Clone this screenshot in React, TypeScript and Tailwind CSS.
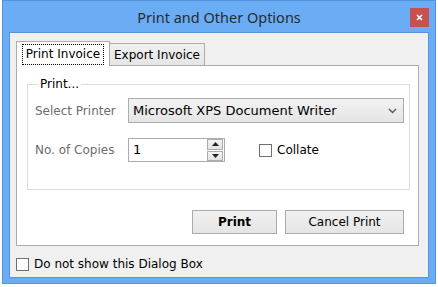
import React from "react";

const ui = { fontFamily: '"DejaVu Sans", Verdana, sans-serif' };

const Checkbox: React.FC = () => (
  <span className="inline-block w-[13px] h-[13px] border border-[#707070] bg-white" />
);

const App: React.FC = () => {
  return (
    <div className="w-[438px] h-[287px] bg-white">
      <div className="ml-[2px] w-[434px] h-[284px] bg-[#6aadf5] border border-[#5492da] flex flex-col px-[6px] pb-[5px]">
        {/* title bar */}
        <div className="relative h-[31px] flex items-center justify-center pt-[2px]">
          <span
            className="text-[14.5px] text-[#2b2b2b]"
            style={{ fontFamily: '"Noto Sans", "Open Sans", sans-serif' }}
          >
            Print and Other Options
          </span>
          <button className="absolute right-[0px] top-[7px] w-[19px] h-[19px] bg-[#c75050] flex items-center justify-center">
            <svg width="7" height="7" viewBox="0 0 7 7">
              <path d="M1 1l5 5M6 1l-5 5" stroke="#fff" strokeWidth="1.6" />
            </svg>
          </button>
        </div>

        {/* body */}
        <div
          className="flex-1 bg-[#f0f0f0] border border-[#5a94d6] flex flex-col pt-[7px] pl-[6px] pr-[9px]"
          style={ui}
        >
          {/* tabs */}
          <div className="flex items-end h-[25px] text-[12px] text-black">
            <div className="relative z-10 h-[25px] w-[94px] bg-white border border-b-0 border-[#acacac] flex items-center justify-center -mb-px">
              <span className="border border-dotted border-black px-[3px] h-[21px] flex items-center">
                Print Invoice
              </span>
            </div>
            <div className="h-[22px] w-[95px] border border-l-0 border-b-0 border-[#acacac] flex items-center justify-center bg-gradient-to-b from-[#f0f0f0] to-[#e5e5e5]">
              Export Invoice
            </div>
          </div>

          {/* panel */}
          <div className="h-[181px] bg-white border border-[#acacac] flex flex-col pl-[10px] pr-[8px]">
            <fieldset className="mt-[10px] h-[114px] border border-[#dcdcdc] pl-[7px] pr-[5px]">
              <legend className="ml-[3px] px-[2px] text-[12px] text-black leading-[16px]">
                Print...
              </legend>
              <div className="flex items-center mt-[6px] h-[25px]">
                <span className="w-[93px] text-[12px] text-[#6d6d6d]">
                  Select Printer
                </span>
                <div className="flex-1 h-[25px] border border-[#acacac] bg-gradient-to-b from-[#f2f2f2] to-[#e5e5e5] flex items-center pl-[4px] pr-[6px] text-[13px] text-black">
                  <span className="flex-1">Microsoft XPS Document Writer</span>
                  <svg width="9" height="6" viewBox="0 0 9 6">
                    <path d="M1 1l3.5 3.5L8 1" stroke="#555" strokeWidth="1.4" fill="none" />
                  </svg>
                </div>
              </div>
              <div className="flex items-center mt-[15px] h-[24px]">
                <span className="w-[93px] text-[12px] text-[#6d6d6d]">
                  No. of Copies
                </span>
                <div className="w-[97px] h-[24px] border border-[#acacac] bg-white flex items-center">
                  <span className="flex-1 pl-[4px] text-[13px] text-black">1</span>
                  <div className="w-[16px] h-[22px] flex flex-col gap-px mr-px">
                    <div className="flex-1 bg-gradient-to-b from-[#f4f4f4] to-[#e2e2e2] border border-[#acacac] flex items-center justify-center">
                      <svg width="7" height="4" viewBox="0 0 7 4">
                        <path d="M0 4L3.5 0L7 4Z" fill="#222" />
                      </svg>
                    </div>
                    <div className="flex-1 bg-gradient-to-b from-[#f4f4f4] to-[#e2e2e2] border border-[#acacac] flex items-center justify-center">
                      <svg width="7" height="4" viewBox="0 0 7 4">
                        <path d="M0 0L3.5 4L7 0Z" fill="#222" />
                      </svg>
                    </div>
                  </div>
                </div>
                <div className="ml-[34px] flex items-center gap-[5px] text-[12px] text-black">
                  <Checkbox />
                  <span>Collate</span>
                </div>
              </div>
            </fieldset>

            <div className="flex justify-end gap-[8px] mt-[20px] pr-[6px]">
              <button className="w-[85px] h-[24px] border border-[#acacac] bg-gradient-to-b from-[#f0f0f0] to-[#e5e5e5] text-[12px] font-bold text-black">
                Print
              </button>
              <button className="w-[119px] h-[24px] border border-[#acacac] bg-gradient-to-b from-[#f0f0f0] to-[#e5e5e5] text-[12px] text-black">
                Cancel Print
              </button>
            </div>
          </div>

          {/* footer */}
          <div className="flex items-center gap-[5px] mt-[9px] text-[12px] text-black">
            <Checkbox />
            <span>Do not show this Dialog Box</span>
          </div>
        </div>
      </div>
    </div>
  );
};

export default App;
